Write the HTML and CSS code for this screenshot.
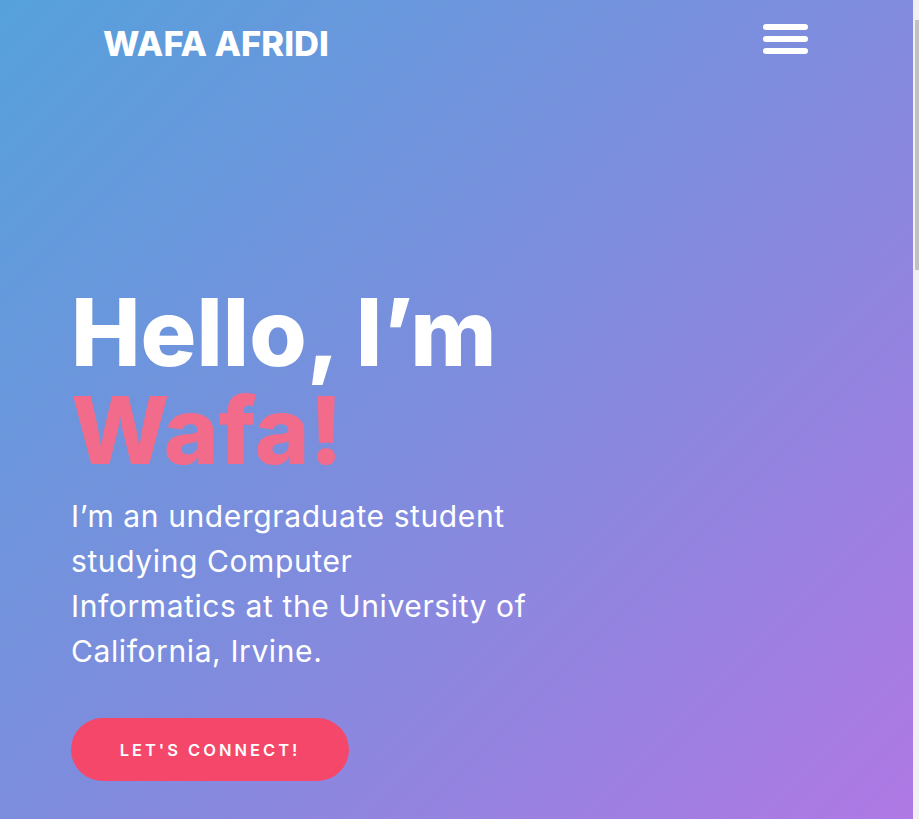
FILE: index.html
```html
<!DOCTYPE html>
<html lang="en">
<head>
<meta charset="utf-8">
<title>Wafa Afridi</title>
<link rel="stylesheet" href="styles.css">
</head>
<body>
<section class="hero">
  <header class="topbar">
    <a class="logo" href="#">WAFA AFRIDI</a>
    <button class="menu" aria-label="Menu">
      <span class="bar"></span>
      <span class="bar"></span>
      <span class="bar"></span>
    </button>
  </header>
  <div class="intro">
    <h1 class="title">Hello, I’m<br><span class="name">Wafa!</span></h1>
    <p class="lead">I’m an undergraduate student studying Computer<br>Informatics at the University of California, Irvine.</p>
    <a class="cta" href="#">LET'S CONNECT!</a>
  </div>
</section>
<section class="more"></section>
<div class="scrollbar"><div class="thumb"></div></div>
</body>
</html>
```

FILE: styles.css
```css
html, body {
  margin: 0;
  padding: 0;
}
body {
  font-family: "Inter", "Noto Sans", sans-serif;
  color: #fff;
}
.hero {
  min-height: 100vh;
  box-sizing: border-box;
  background: linear-gradient(135deg, #55a1dc 0%, #7f8cdd 50%, #b078e4 100%);
  display: flex;
  flex-direction: column;
}
.topbar {
  display: flex;
  justify-content: space-between;
  align-items: center;
  padding: 20px 111px 0 103px;
  height: 46px;
}
.logo {
  color: #fff;
  text-decoration: none;
  font-weight: 800;
  font-size: 34.5px;
}
.menu {
  background: none;
  border: 0;
  padding: 0;
  margin-bottom: 9px;
  display: flex;
  flex-direction: column;
  gap: 6px;
  width: 45px;
  cursor: pointer;
}
.bar {
  display: block;
  height: 6px;
  border-radius: 3px;
  background: #fff;
}
.intro {
  padding: 217px 0 0 71px;
  display: flex;
  flex-direction: column;
  align-items: flex-start;
}
.title {
  margin: 0;
  font-weight: 800;
  font-size: 93px;
  line-height: 98px;
  letter-spacing: 0;
}
.name {
  color: #f36b8a;
}
.lead {
  margin: 15px 0 0;
  max-width: 472px;
  font-size: 30px;
  line-height: 45px;
  font-weight: 400;
  letter-spacing: 0.6px;
}
.cta {
  display: flex;
  align-items: center;
  justify-content: center;
  margin-top: 44px;
  width: 278px;
  height: 63px;
  border-radius: 32px;
  background: #f5476a;
  color: #fff;
  text-decoration: none;
  font-size: 16.5px;
  font-weight: 600;
  letter-spacing: 3px;
}
.more {
  height: 1860px;
  background: #fff;
}
.scrollbar {
  position: fixed;
  top: 0;
  right: 0;
  bottom: 0;
  width: 6px;
  background: #f1f1f1;
}
.thumb {
  margin: 20px 0 0 2px;
  width: 4px;
  height: 250px;
  background: #c1c1c1;
}
```
